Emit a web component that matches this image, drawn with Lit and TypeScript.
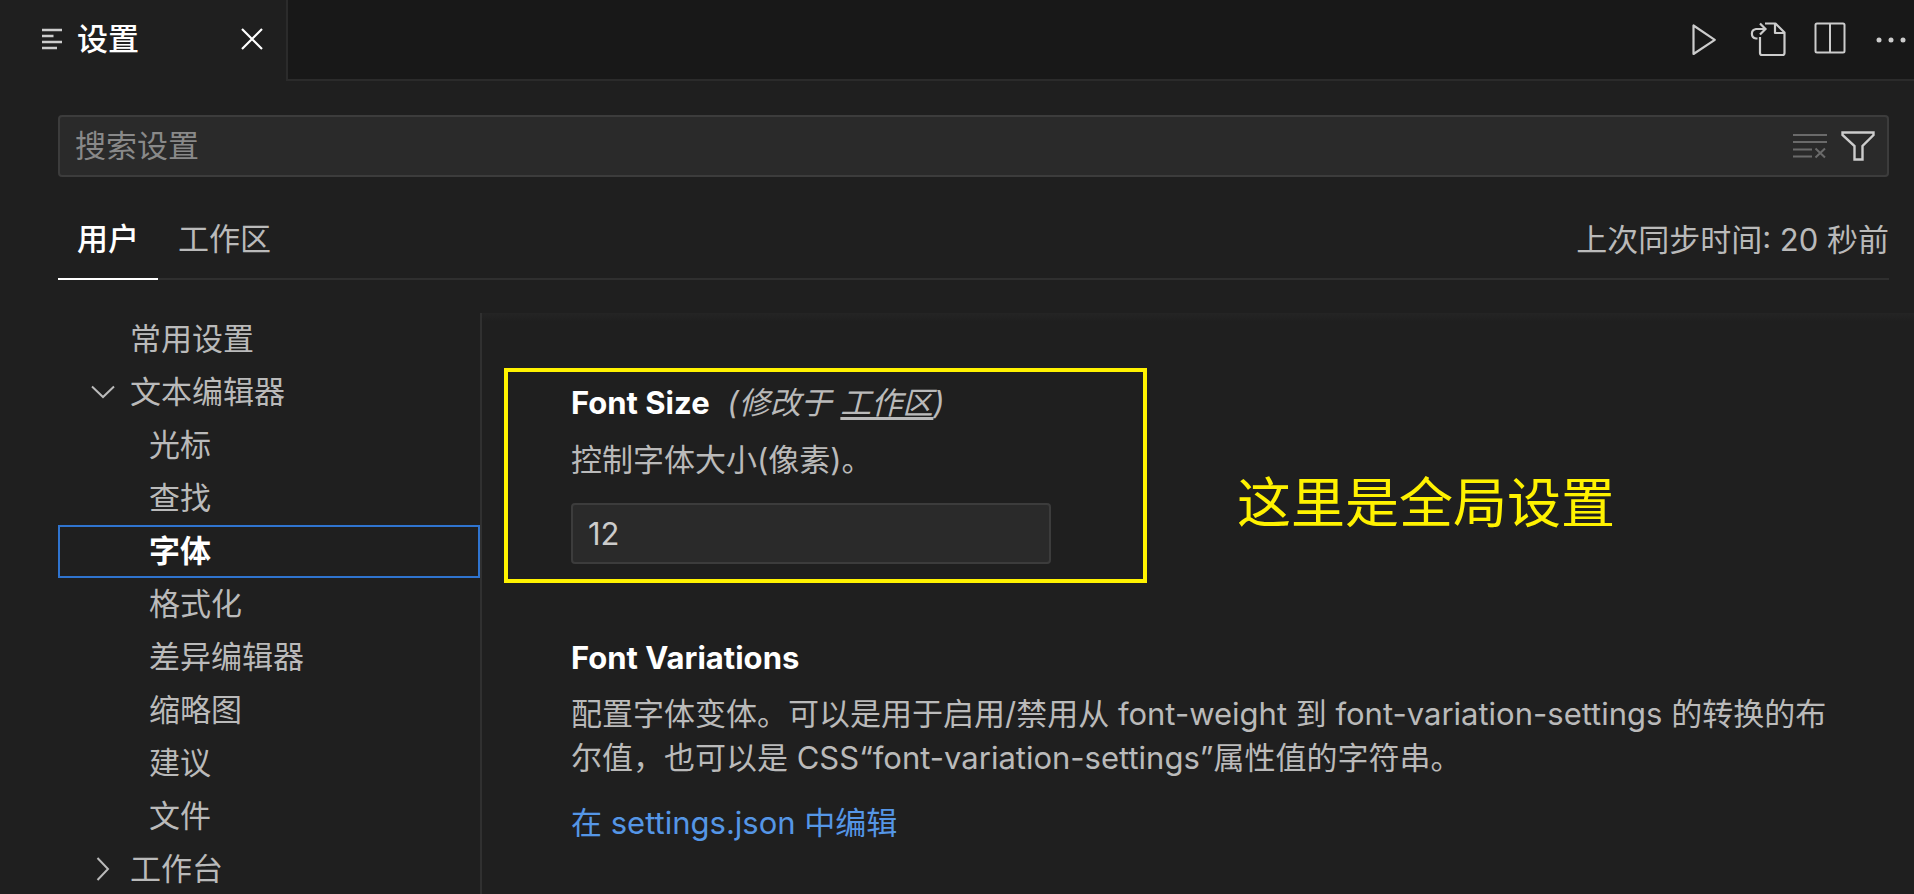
import { LitElement, html, css, svg } from "lit";
import { customElement, state } from "lit/decorators.js";

interface TreeRow {
  label: string;
  depth: 0 | 1;
  twistie?: "open" | "closed";
}

const ROWS: TreeRow[] = [
  { label: "常用设置", depth: 0 },
  { label: "文本编辑器", depth: 0, twistie: "open" },
  { label: "光标", depth: 1 },
  { label: "查找", depth: 1 },
  { label: "字体", depth: 1 },
  { label: "格式化", depth: 1 },
  { label: "差异编辑器", depth: 1 },
  { label: "缩略图", depth: 1 },
  { label: "建议", depth: 1 },
  { label: "文件", depth: 1 },
  { label: "工作台", depth: 0, twistie: "closed" },
];

const icon = (width: number, height: number, body: unknown) => html`
  <svg width=${width} height=${height} viewBox="0 0 ${width} ${height}" fill="none"
    stroke="currentColor" stroke-width="2" aria-hidden="true">${body}</svg>`;

const listIcon = icon(20, 22, svg`<path stroke-width="2.4" d="M0 2h20M0 8h11.5M0 14h20M0 20h15"/>`);
const closeIcon = icon(22, 22, svg`<path stroke-width="2.2" d="M1 1l20 20M21 1L1 21"/>`);
const runIcon = icon(28, 34, svg`<path stroke-linejoin="round" stroke-width="2.2" d="M1.500 2.500v28.500L22.800 16.800z"/>`);
const openFileIcon = icon(38, 36, svg`<path stroke-width="2.2" stroke-linejoin="round"
  d="M17 1.500h10.500l9 9V31q0 2-2 2H14q-2 0-2-2V15M27 1.500v9.500h9.500"/><path stroke-width="2.2"
  d="M9.500 16.500H8A4.800 4.800 0 0 1 8 7H17M12 1.500l5.500 5.500-5.500 5.500"/>`);
const splitIcon = icon(32, 36, svg`<rect x="1.500" y="1.500" width="29" height="29" rx="1.500"/><path d="M16 1v30"/>`);
const moreIcon = icon(32, 6, svg`<g fill="currentColor" stroke="none"><circle cx="5" cy="3" r="2.500"/>
  <circle cx="17" cy="3" r="2.500"/><circle cx="29" cy="3" r="2.500"/></g>`);
const clearIcon = icon(34, 26, svg`<path d="M0 2h34M0 9h34M0 16.500h19M0 23.500h19M22.500 15.500l9.500 9M32 15.500l-9.500 9"/>`);
const filterIcon = icon(34, 30, svg`<path stroke-width="2.4" d="M1.500 1.500h31v2.500L21.500 15v13.500h-8V15L1.500 4z"/>`);
const openTwistie = icon(24, 14, svg`<path d="M1 1.500l11 10.500 11-10.500"/>`);
const closedTwistie = icon(14, 24, svg`<path d="M1.500 1l10.500 11L1.500 23"/>`);

@customElement("app-root")
export class AppRoot extends LitElement {
  @state() private selected = "字体";
  @state() private scope = "用户";

  static styles = css`
    :host {
      display: flex;
      flex-direction: column;
      height: 100vh;
      overflow: hidden;
      background: #1f1f1f;
      color: #bababa;
      font: 31px/44px Inter, "Noto Sans CJK SC", sans-serif;
    }
    * { box-sizing: border-box; }
    svg { display: block; flex: none; }
    h1, h2, p, ul { margin: 0; padding: 0; font: inherit; }
    button {
      display: flex;
      align-items: center;
      padding: 0;
      border: 0;
      background: none;
      color: inherit;
      font: inherit;
      cursor: pointer;
    }
    input {
      min-width: 0;
      padding: 0;
      border: 0;
      outline: 0;
      background: none;
      color: #cccccc;
      font: inherit;
    }
    input::placeholder { color: #898989; opacity: 1; }

    .titlebar { display: flex; flex: none; height: 81px; }
    .tab {
      display: flex;
      align-items: center;
      width: 288px;
      padding: 0 23px 4px 42px;
      border-right: 2px solid #2b2b2b;
      color: #ffffff;
    }
    .tab-icon { color: #cccccc; }
    .tab-title { flex: 1; margin-left: 15px; font-weight: 500; }
    .actions {
      display: flex;
      flex: 1;
      align-items: center;
      justify-content: flex-end;
      gap: 28px;
      padding-right: 8px;
      border-bottom: 2px solid #2b2b2b;
      background: #181818;
      color: #cccccc;
    }

    .header { flex: none; padding: 34px 25px 0 58px; }
    .search {
      display: flex;
      align-items: center;
      gap: 14px;
      height: 62px;
      padding: 0 12px 0 15px;
      border: 2px solid #3c3c3c;
      border-radius: 4px;
      background: #2a2a2a;
      color: #cccccc;
    }
    .search input { flex: 1; height: 44px; }
    .clear { color: #6a6a6a; }
    .scopes {
      display: flex;
      align-items: stretch;
      gap: 1px;
      height: 78px;
      margin-top: 25px;
      border-bottom: 2px solid #2f2f2f;
    }
    .scope { margin-bottom: -2px; padding: 0 19px 2px; border-bottom: 2px solid transparent; }
    .scope.active { border-color: #ffffff; color: #ffffff; font-weight: 500; }
    .sync { margin-left: auto; padding-top: 16px; }

    .body { display: flex; flex: 1; min-height: 0; padding: 33px 0 0 58px; }
    .tree { width: 424px; flex: none; list-style: none; border-right: 2px solid #303030; }
    .row { width: 100%; height: 53px; padding: 0 12px 2px 0; border: 2px solid transparent; }
    .row.selected { border-color: #2f74cf; color: #ffffff; font-weight: 700; }
    .twistie { display: flex; justify-content: center; width: 24px; margin: 0 15px 0 31px; }
    .depth-1 .twistie { margin-right: 34px; }

    .settings {
      flex: 1;
      min-width: 0;
      padding: 55px 60px 0 22px;
      background: linear-gradient(#242424, #202020 7px, #1f1f1f 8px);
    }
    .marked { display: flex; align-items: center; gap: 90px; }
    .frame {
      width: 643px;
      height: 215px;
      padding: 9px 64px 0 63px;
      border: 4px solid #fff200;
    }
    .name { color: #ffffff; font-weight: 700; }
    .scope-note { margin-left: 9px; font-style: italic; }
    .scope-note a { color: inherit; text-decoration: underline; text-underline-offset: 3px; }
    .frame p { margin-top: 13px; }
    .number {
      width: 480px;
      height: 61px;
      margin-top: 21px;
      padding: 0 15px;
      border: 2px solid #3c3c3c;
      border-radius: 4px;
      background: #2a2a2a;
    }
    .callout { padding-top: 56px; color: #fff200; font-size: 54px; line-height: 72px; white-space: nowrap; }
    .setting { padding: 53px 0 0 67px; }
    .setting p { margin-top: 12px; }
    .edit { display: inline-block; margin-top: 21px; color: #5596e6; text-decoration: none; }
  `;

  render() {
    return html`
      <header class="titlebar">
        <div class="tab">
          <span class="tab-icon">${listIcon}</span>
          <h1 class="tab-title">设置</h1>
          <button aria-label="关闭">${closeIcon}</button>
        </div>
        <div class="actions">
          <button aria-label="运行">${runIcon}</button>
          <button aria-label="打开设置 (JSON)">${openFileIcon}</button>
          <button aria-label="拆分编辑器">${splitIcon}</button>
          <button aria-label="更多操作">${moreIcon}</button>
        </div>
      </header>

      <section class="header">
        <div class="search">
          <input type="text" placeholder="搜索设置" aria-label="搜索设置" />
          <button class="clear" aria-label="清除搜索">${clearIcon}</button>
          <button aria-label="筛选设置">${filterIcon}</button>
        </div>
        <div class="scopes">
          ${["用户", "工作区"].map((s) => html`
            <button class="scope ${s === this.scope ? "active" : ""}"
              @click=${() => (this.scope = s)}>${s}</button>`)}
          <span class="sync">上次同步时间: 20 秒前</span>
        </div>
      </section>

      <div class="body">
        <ul class="tree">
          ${ROWS.map((r) => html`
            <li>
              <button class="row depth-${r.depth} ${r.label === this.selected ? "selected" : ""}"
                @click=${() => (this.selected = r.label)}>
                <span class="twistie">${r.twistie === "open" ? openTwistie : r.twistie === "closed" ? closedTwistie : ""}</span>
                ${r.label}
              </button>
            </li>`)}
        </ul>
        <main class="settings">
          <div class="marked">
            <div class="frame">
              <h2>
                <label class="name" for="font-size">Font Size</label>
                <span class="scope-note">(修改于 <a href="#workspace">工作区</a>)</span>
              </h2>
              <p>控制字体大小(像素)。</p>
              <input class="number" id="font-size" type="text" inputmode="numeric" .value=${"12"} />
            </div>
            <span class="callout">这里是全局设置</span>
          </div>
          <section class="setting">
            <h2 class="name">Font Variations</h2>
            <p>配置字体变体。可以是用于启用/禁用从 font-weight 到 font-variation-settings 的转换的布尔值，也可以是 CSS“font-variation-settings”属性值的字符串。</p>
            <a class="edit" href="#settings-json">在 settings.json 中编辑</a>
          </section>
        </main>
      </div>
    `;
  }
}
